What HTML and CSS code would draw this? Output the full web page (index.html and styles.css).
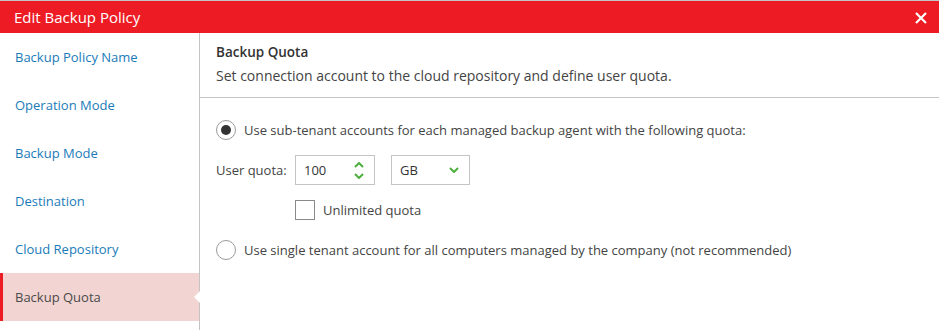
FILE: index.html
```html
<!DOCTYPE html>
<html lang="en">
<head>
  <meta charset="UTF-8">
  <title>Edit Backup Policy</title>
  <link rel="stylesheet" href="styles.css">
</head>
<body>
  <div class="dialog">
    <div class="header">
      <div class="header-title">Edit Backup Policy</div>
      <div class="close-btn">
        <svg width="12" height="12" viewBox="0 0 12 12"><path d="M1 1 L11 11 M11 1 L1 11" stroke="#fff" stroke-width="2.2"/></svg>
      </div>
    </div>
    <div class="body">
      <div class="sidebar">
        <div class="nav-item">Backup Policy Name</div>
        <div class="nav-item">Operation Mode</div>
        <div class="nav-item">Backup Mode</div>
        <div class="nav-item">Destination</div>
        <div class="nav-item">Cloud Repository</div>
        <div class="nav-item active">Backup Quota</div>
      </div>
      <div class="content">
        <div class="section-head">
          <div class="section-title">Backup Quota</div>
          <div class="section-desc">Set connection account to the cloud repository and define user quota.</div>
        </div>
        <div class="options">
          <div class="radio-row">
            <span class="radio checked"></span>
            <span>Use sub-tenant accounts for each managed backup agent with the following quota:</span>
          </div>
          <div class="quota-row">
            <span class="quota-label">User quota:</span>
            <div class="spinner">
              <span>100</span>
              <div class="spin-arrows">
                <svg width="10" height="6" viewBox="0 0 10 6"><path d="M1 5 L5 1 L9 5" stroke="#4caf3c" stroke-width="2" fill="none"/></svg>
                <svg width="10" height="6" viewBox="0 0 10 6"><path d="M1 1 L5 5 L9 1" stroke="#4caf3c" stroke-width="2" fill="none"/></svg>
              </div>
            </div>
            <div class="select">
              <span>GB</span>
              <svg width="10" height="6" viewBox="0 0 10 6"><path d="M1 1 L5 5 L9 1" stroke="#4caf3c" stroke-width="2" fill="none"/></svg>
            </div>
          </div>
          <div class="check-row">
            <span class="checkbox"></span>
            <span>Unlimited quota</span>
          </div>
          <div class="radio-row second">
            <span class="radio"></span>
            <span>Use single tenant account for all computers managed by the company (not recommended)</span>
          </div>
        </div>
      </div>
    </div>
  </div>
</body>
</html>
```
FILE: styles.css
```css
body {
  margin: 0;
  font-family: 'Open Sans', sans-serif;
  font-size: 13px;
  color: #444;
  background-color: #fff;
}

.dialog {
  width: 939px;
  height: 330px;
  border-top: 1px solid #c4c4c4;
  box-sizing: border-box;
  overflow: hidden;
}

.header {
  height: 32px;
  background-color: #ed1c24;
  color: #fff;
  display: flex;
  align-items: center;
  justify-content: space-between;
  padding: 0 12px 0 14px;
}

.header-title {
  font-size: 15px;
}

.close-btn {
  display: flex;
  margin-top: 1px;
}

.body {
  display: flex;
  height: 297px;
}

.sidebar {
  width: 199px;
  border-right: 1px solid #c4c4c4;
}

.nav-item {
  height: 48px;
  display: flex;
  align-items: center;
  padding-left: 15px;
  color: #1a7bb9;
  position: relative;
}

.nav-item.active {
  background-color: #f2d4d2;
  color: #4a4a4a;
  border-left: 3px solid #ed1c24;
  padding-left: 12px;
}

.nav-item.active::after {
  content: '';
  position: absolute;
  right: -1px;
  top: 18px;
  border-top: 6px solid transparent;
  border-bottom: 6px solid transparent;
  border-right: 6px solid #fff;
}

.content {
  flex: 1;
}

.section-head {
  height: 65px;
  border-bottom: 1px solid #c4c4c4;
  padding-left: 16px;
  box-sizing: border-box;
  padding-top: 10px;
}

.section-title {
  font-weight: 600;
  font-size: 13.5px;
  color: #333;
  margin-bottom: 5px;
}

.section-desc {
  font-size: 14px;
}

.options {
  padding: 22px 0 0 16px;
}

.radio-row {
  display: flex;
  align-items: center;
  gap: 8px;
  height: 20px;
}

.radio-row.second {
  margin-top: 20px;
}

.radio {
  width: 18px;
  height: 18px;
  border: 1px solid #9a9a9a;
  border-radius: 50%;
  display: flex;
  align-items: center;
  justify-content: center;
  background: #fff;
}

.radio.checked::after {
  content: '';
  width: 10px;
  height: 10px;
  border-radius: 50%;
  background-color: #333;
}

.quota-row {
  display: flex;
  align-items: center;
  margin-top: 15px;
  height: 30px;
}

.quota-label {
  width: 79px;
}

.spinner,
.select {
  height: 30px;
  border: 1px solid #c4c4c4;
  box-sizing: border-box;
  display: flex;
  align-items: center;
  justify-content: space-between;
  padding: 0 10px 0 8px;
  color: #333;
}

.spinner {
  width: 80px;
}

.select {
  width: 79px;
  margin-left: 16px;
}

.spin-arrows {
  display: flex;
  flex-direction: column;
  gap: 5px;
}

.spin-arrows svg,
.select svg {
  display: block;
}

.check-row {
  display: flex;
  align-items: center;
  gap: 8px;
  margin-top: 15px;
  margin-left: 79px;
  height: 20px;
}

.checkbox {
  width: 18px;
  height: 18px;
  border: 1px solid #8a8a8a;
  background: #fff;
}
```
